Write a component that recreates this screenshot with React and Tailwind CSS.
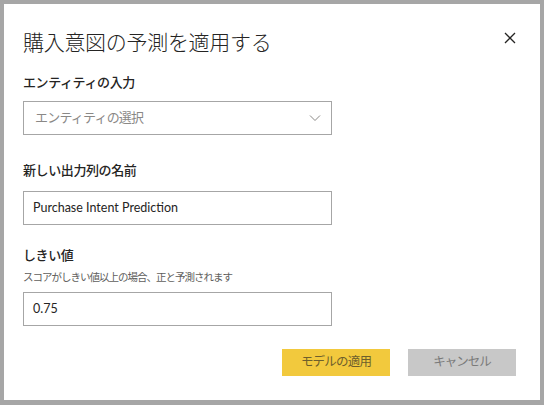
import React from "react";

export default function App() {
  return (
    <div className="w-[544px] h-[405px] bg-[#a6a6a6] pt-[4px] pl-[4px] pr-[4px] pb-[5px] font-['Noto_Sans','Noto_Sans_CJK_JP',sans-serif]">
      <div className="w-full h-full bg-white flex flex-col pl-[19px] pr-[24px]">
        <div className="flex items-start justify-between pt-[24px]">
          <h1 className="text-[21px] leading-[28px] font-light text-[#252423] tracking-[-0.3px]">
            購入意図の予測を適用する
          </h1>
          <button className="mt-[2px] mr-[-2px] w-[16px] h-[16px] flex items-center justify-center text-[#252423]">
            <svg width="12" height="12" viewBox="0 0 12 12" fill="none" stroke="currentColor" strokeWidth="1.3">
              <path d="M1 1 L11 11 M11 1 L1 11" />
            </svg>
          </button>
        </div>

        <label className="mt-[16px] text-[13px] leading-[20px] font-medium text-[#252423] tracking-[-0.4px]">
          エンティティの入力
        </label>
        <div className="mt-[9px] w-[309px] h-[34px] border border-[#a6a6a6] flex items-center justify-between pl-[11px] pr-[10px]">
          <span className="text-[13px] text-[#8a8886] tracking-[-0.8px]">エンティティの選択</span>
          <svg width="12" height="8" viewBox="0 0 12 8" fill="none" stroke="#8a8886" strokeWidth="1">
            <path d="M1 1.5 L6 6.5 L11 1.5" />
          </svg>
        </div>

        <label className="mt-[25px] text-[13px] leading-[20px] font-medium text-[#252423] tracking-[-0.4px]">
          新しい出力列の名前
        </label>
        <div className="mt-[11px] w-[309px] h-[34px] border border-[#a6a6a6] flex items-center pl-[9px]">
          <span className="text-[12.5px] text-[#252423] font-['Lato',sans-serif]">Purchase Intent Prediction</span>
        </div>

        <label className="mt-[20px] text-[13px] leading-[20px] font-medium text-[#252423] tracking-[-0.4px]">
          しきい値
        </label>
        <div className="mt-[4px] text-[10.5px] leading-[16px] text-[#605e5c] tracking-[-1px]">
          スコアがしきい値以上の場合、正と予測されます
        </div>
        <div className="mt-[7px] w-[309px] h-[34px] border border-[#a6a6a6] flex items-center pl-[9px]">
          <span className="text-[12.5px] text-[#252423] font-['Lato',sans-serif]">0.75</span>
        </div>

        <div className="mt-[23px] flex justify-end gap-[18px]">
          <button className="w-[108px] h-[27px] bg-[#f2c93d] text-[12.5px] text-[#6e5f2c] tracking-[-0.8px]">
            モデルの適用
          </button>
          <button className="w-[108px] h-[27px] bg-[#c8c8c8] text-[12.5px] text-[#7a7a7a] tracking-[-1px]">
            キャンセル
          </button>
        </div>
      </div>
    </div>
  );
}
